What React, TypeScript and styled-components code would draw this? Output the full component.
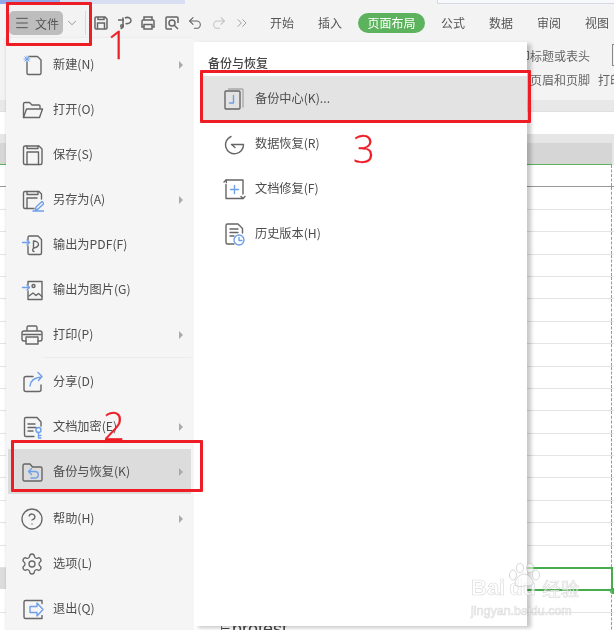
import React from "react";
import styled, { createGlobalStyle } from "styled-components";
import { ChevronDown, ChevronsRight, CircleHelp, Menu, Redo2, Settings, Undo2 } from "lucide-react";

const FONT = `"Noto Sans CJK SC", "Noto Sans", "Liberation Sans", sans-serif`;
const BLUE = "#6f9fe8";

const Global = createGlobalStyle`
  html, body { margin: 0; padding: 0; background: #fff; }
  * { box-sizing: border-box; }
`;

const Page = styled.div`
  position: relative;
  width: 614px;
  height: 630px;
  overflow: hidden;
  background: #fff;
  font-family: ${FONT};
  color: #555;
  filter: blur(0.3px);
`;
const TopStrip = styled.div`
  height: 4px;
  display: flex;
  background: #f3f3f3;
`;
const StripTab = styled.div<{ $width: number; $color: string }>`
  width: ${(p) => p.$width}px;
  background: ${(p) => p.$color};
`;
const StripFill = styled.div`
  flex: 1;
  margin-left: 252px;
  background: #f7f8fb;
  border-left: 1px solid #d5d9e4;
  border-bottom: 1px solid #d5d9e4;
`;
const Toolbar = styled.div`
  height: 38px;
  background: #f3f3f3;
  display: flex;
  align-items: center;
  padding: 0 0 0 9px;
  white-space: nowrap;
  overflow: hidden;
  & > * { flex: none; }
`;
const FileButton = styled.div`
  width: 54px;
  height: 24px;
  border-radius: 5px;
  background: #bdbdbd;
  display: flex;
  align-items: center;
  gap: 5px;
  padding-left: 5px;
  font-size: 12px;
  color: #555;
  svg { color: #555; flex: none; }
`;
const FileCaret = styled.div`
  width: 14px;
  margin-left: 2px;
  display: flex;
  color: #888;
`;
const VDivider = styled.div`
  width: 1px;
  height: 24px;
  margin: 0 7px 0 6px;
  background: #d9d9d9;
`;
const Quick = styled.div`
  display: flex;
  align-items: center;
  gap: 7.5px;
  color: #666;
  svg { flex: none; }
`;
const QuickIcon = styled.svg`
  width: 16px;
  height: 16px;
  fill: none;
  stroke: #666;
  stroke-width: 1.5;
`;
const Tabs = styled.div`
  margin-left: 8px;
  display: flex;
  align-items: center;
  & > * { flex: none; }
`;
const Tab = styled.div<{ $on?: boolean }>`
  font-size: 12px;
  line-height: 20px;
  height: 20px;
  padding: ${(p) => (p.$on ? "0 9.5px" : "0 12px")};
  margin: ${(p) => (p.$on ? "0 4px" : "0")};
  border-radius: 10px;
  color: ${(p) => (p.$on ? "#fff" : "#555")};
  background: ${(p) => (p.$on ? "#5cb25d" : "transparent")};
`;
const Ribbon = styled.div`
  height: 58px;
  background: #f3f3f3;
  display: flex;
  flex-direction: column;
  overflow: hidden;
  padding-top: 1px;
`;
const RibbonLine = styled.div<{ $inset: number }>`
  height: 24px;
  display: flex;
  align-items: center;
  gap: 8px;
  padding-left: ${(p) => p.$inset}px;
  font-size: 12px;
  color: #666;
  white-space: nowrap;
`;
const RibbonBox = styled.span`
  width: 8px;
  height: 22px;
  margin-left: 14px;
  border: 1px solid #888;
  flex: none;
`;
const RibbonEdge = styled.div`
  height: 12px;
  background: #e8e8e8;
  border-bottom: 1px solid #e0e0e0;
`;
const FormulaBar = styled.div`
  height: 22px;
  background: #fff;
`;
const HeaderGap = styled.div`
  height: 9px;
  background: #e6e6e6;
`;
const ColHeader = styled.div`
  height: 22px;
  background: #e6e6e6;
  display: flex;
`;
const ColCell = styled.div`
  width: 612px;
  height: 22px;
  background: #d6d6d6;
  border-bottom: 1.5px solid #5cb25d;
`;
const SheetRow = styled.div<{ $line: string }>`
  height: 22.4px;
  display: flex;
  border-bottom: 1px solid ${(p) => p.$line};
  position: relative;
`;
const Cell = styled.div<{ $selected?: boolean }>`
  width: ${(p) => (p.$selected ? 607 : 612)}px;
  border-right: 1px dashed #999;
  font-family: "Liberation Sans", sans-serif;
  font-size: 18px;
  color: #444;
  ${(p) => p.$selected && `
    border: 2px solid #46ad4c;
    margin-top: -1px;
    height: 24px;
    position: relative;
  `}
`;
const RowHead = styled.div<{ $selected?: boolean }>`
  width: ${(p) => (p.$selected ? 6 : 0)}px;
  flex: none;
  background: #dcdcdc;
`;
const Handle = styled.span`
  position: absolute;
  right: -5px;
  bottom: -5px;
  width: 6px;
  height: 6px;
  border-radius: 50%;
  background: #46ad4c;
`;
const CellText = styled.div`
  display: flex;
  padding: 5px 0 0 220px;
  line-height: 22px;
  white-space: nowrap;
`;
const CellTick = styled.span`
  width: 12px;
  font-size: 12px;
  flex: none;
`;
const Overlay = styled.div`
  position: absolute;
  left: 6px;
  top: 42px;
  display: flex;
  align-items: flex-start;
`;
const MainMenu = styled.div`
  width: 188px;
  height: 592px;
  margin-top: -4px;
  padding-top: 4px;
  background: #f5f5f5;
  box-shadow: -1px 0 2px rgba(0, 0, 0, 0.08);
`;
const SubMenu = styled.div`
  width: 333px;
  height: 584px;
  background: #fff;
  box-shadow: 4px 2px 4px rgba(0, 0, 0, 0.22);
  padding-top: 13px;
`;
const SubTitle = styled.div`
  height: 21px;
  padding-left: 14px;
  font-size: 12px;
  line-height: 16px;
  font-weight: 500;
  color: #444;
`;
const Label = styled.span`
  padding-bottom: 2px;
`;
const Row = styled.div<{ $active?: boolean; $gap?: number }>`
  height: 45px;
  margin: ${(p) => p.$gap ?? 0}px 3px 0 2px;
  padding: 0 8px 0 12px;
  display: flex;
  align-items: center;
  gap: 9px;
  font-size: 12.2px;
  color: #4d4d4d;
  white-space: nowrap;
  background: ${(p) => (p.$active ? "#dcdcdc" : "transparent")};
`;
const SubRow = styled.div<{ $active?: boolean }>`
  height: 45px;
  margin-left: 8px;
  padding-left: 20px;
  display: flex;
  align-items: center;
  gap: 9px;
  font-size: 12.2px;
  color: #4d4d4d;
  white-space: nowrap;
  background: ${(p) => (p.$active ? "#e3e3e3" : "transparent")};
`;
const Caret = styled.span`
  margin-left: auto;
  width: 0;
  height: 0;
  border-left: 4px solid #aaa;
  border-top: 4px solid transparent;
  border-bottom: 4px solid transparent;
`;
const MenuDivider = styled.div`
  height: 1px;
  margin: 0 3px 0 37px;
  background: #ececec;
`;
const Ico = styled.svg`
  width: 24px;
  height: 24px;
  flex: none;
  fill: none;
  stroke: #666;
  stroke-width: 1.4;
  stroke-linecap: round;
  stroke-linejoin: round;
  color: #666;
`;
const Mark = styled.div<{ $l: number; $t: number; $w: number; $h: number }>`
  position: absolute;
  left: ${(p) => p.$l}px;
  top: ${(p) => p.$t}px;
  width: ${(p) => p.$w}px;
  height: ${(p) => p.$h}px;
  border: 3.5px solid #ee1c25;
  border-radius: 1px;
`;
const Digit = styled.div<{ $l: number; $t: number }>`
  position: absolute;
  left: ${(p) => p.$l}px;
  top: ${(p) => p.$t}px;
  font-family: "Open Sans", "Liberation Sans", sans-serif;
  font-size: 38px;
  font-weight: 300;
  line-height: 38px;
  color: #ee1c25;
  -webkit-text-stroke: 0.3px #ee1c25;
`;
const Watermark = styled.div`
  position: absolute;
  left: 471px;
  top: 563px;
  width: 112px;
  color: rgba(255, 255, 255, 0.7);
  -webkit-text-stroke: 0.7px rgba(170, 170, 170, 0.4);
  font-family: "Liberation Sans", sans-serif;
`;
const WmMain = styled.div`
  display: flex;
  align-items: flex-end;
  height: 36px;
  font-size: 22px;
  line-height: 23px;
  font-weight: 700;
  white-space: nowrap;
`;
const WmGap = styled.span`
  width: 4px;
`;
const WmCjk = styled.span`
  margin-left: 6px;
  font-family: ${FONT};
  font-size: 18.5px;
  line-height: 22px;
  font-weight: 400;
`;
const WmUrl = styled.div`
  margin-top: 6px;
  font-size: 12.5px;
  line-height: 12px;
  white-space: nowrap;
`;
const Paw = styled.svg`
  position: absolute;
  left: 36px;
  top: 0;
  width: 33px;
  height: 25px;
  fill: rgba(255, 255, 255, 0.55);
  stroke: rgba(170, 170, 170, 0.45);
  stroke-width: 1;
`;

const B = { stroke: BLUE };

const icons: Record<string, React.ReactNode> = {
  new: (
    <Ico viewBox="0 0 24 24">
      <path d="M9 3.500h8.500l3.500 3.500v13a1.500 1.500 0 0 1-1.500 1.500h-11A1.500 1.500 0 0 1 7 20V9" />
      <path style={B} d="M7 3v6M4 6h6M4.800 3.800l4.400 4.400M9.200 3.800 4.800 8.200" strokeWidth="1" />
    </Ico>
  ),
  open: (
    <Ico viewBox="0 0 24 24">
      <path d="M3.500 19.500V6a1.500 1.500 0 0 1 1.500-1.500h4.500l2.500 2.500h7a1 1 0 0 1 1 1v2" />
      <path d="M3.500 19.500 6.500 11h16l-3 8.500z" />
    </Ico>
  ),
  save: (
    <Ico viewBox="0 0 24 24">
      <path d="M5 3h14l3 3v14a1.500 1.500 0 0 1-1.500 1.500H5A1.500 1.500 0 0 1 3.500 20V4.500A1.500 1.500 0 0 1 5 3z" />
      <path d="M7 21.500V9h11.500v12.500M7 3v2.500h11V3" />
    </Ico>
  ),
  saveas: (
    <Ico viewBox="0 0 24 24">
      <path d="M14 20.500H5A1.500 1.500 0 0 1 3.500 19V5A1.500 1.500 0 0 1 5 3.500h14l2.500 2.500v5" />
      <path d="M7 20V10h10M7 3.500v3h11v-3" />
      <path style={B} d="m15 22.500 1-3.500 6-5.500 2 2-6 5.500zM13 23h11" />
    </Ico>
  ),
  pdf: (
    <Ico viewBox="0 0 24 24">
      <path d="M8 7V4.500A1.500 1.500 0 0 1 9.500 3H18l3.500 3.500V20a1.500 1.500 0 0 1-1.500 1.500H9.500A1.500 1.500 0 0 1 8 20v-7" />
      <path d="M14 18.500c-1.500 0-2-2.500 0-3.500 2-.5 4.500-1 4.500-3.500S15.500 8 13.500 8v7" />
      <path style={B} d="M2.500 9.500h7M7 7l2.500 2.500L7 12" />
    </Ico>
  ),
  image: (
    <Ico viewBox="0 0 24 24">
      <path d="M8 7V3.500h14v18H8V13" />
      <circle cx="13.500" cy="8" r="1.500" />
      <path d="m9 18 4-3 3 2.500 2.500-2 3.500 3" />
      <path style={B} d="M2.500 9.500h7M7 7l2.500 2.500L7 12" />
    </Ico>
  ),
  print: (
    <Ico viewBox="0 0 24 24">
      <path d="M7 8V4.500A1.500 1.500 0 0 1 8.500 3h7A1.500 1.500 0 0 1 17 4.500V8M6 18H4A2 2 0 0 1 2 16v-6a2 2 0 0 1 2-2h16a2 2 0 0 1 2 2v6a2 2 0 0 1-2 2h-2" />
      <path d="M6 14h12v7H6zM3 11.500h18" />
    </Ico>
  ),
  share: (
    <Ico viewBox="0 0 24 24">
      <path d="M13 6.500H6A2 2 0 0 0 4 8.500v11a2 2 0 0 0 2 2h13a2 2 0 0 0 2-2V15" />
      <path style={B} d="M10 16c.5-5 4-8.500 11.500-9M18 2.500l4 4-3.500 4" />
    </Ico>
  ),
  lock: (
    <Ico viewBox="0 0 24 24">
      <path d="M14 21.500H6A1.500 1.500 0 0 1 4.500 20V4A1.500 1.500 0 0 1 6 2.500h11L21 7v4" />
      <path d="M8 9h7M8 12.500h8M8 16h5" />
      <circle style={B} cx="18.500" cy="15" r="2.500" />
      <path style={B} d="M18.500 17.500V23M18.500 20.500h2.500M18.500 23h2.500" />
    </Ico>
  ),
  backup: (
    <Ico viewBox="0 0 24 24">
      <path d="M3 19.500V5.500A1.500 1.500 0 0 1 4.500 4H10l2.500 3h8A1.500 1.500 0 0 1 22 8.500v11a1.500 1.500 0 0 1-1.500 1.500h-16A1.500 1.500 0 0 1 3 19.500z" />
      <path style={B} d="M9 11.500h6a3 3 0 0 1 0 6.500h-4M11.500 8.500l-3 3 3 3" />
    </Ico>
  ),
  exit: (
    <Ico viewBox="0 0 24 24">
      <path d="M22 6.500V3.500H5.500A1.500 1.500 0 0 0 4 5v15a1.500 1.500 0 0 0 1.500 1.500H22v-3" />
      <path style={B} d="M10 9.500h7V6l6 6.500-6 6.500v-3.500h-7z" />
    </Ico>
  ),
  center: (
    <Ico viewBox="0 0 24 24">
      <path stroke="#aaa" d="M6.500 2h13.500a1 1 0 0 1 1 1v17" />
      <rect x="3" y="4" width="15" height="18" rx="1" />
      <path style={B} d="M11.500 8.500v7.500H7.500" />
    </Ico>
  ),
  restore: (
    <Ico viewBox="0 0 24 24">
      <path d="M9 4.500A9 9 0 1 0 21.500 12.500H9.500l3.500 3" />
    </Ico>
  ),
  repair: (
    <Ico viewBox="0 0 24 24">
      <path d="M4 3h17v14M21 21.500H4V7.500" />
      <path d="m2 5 2-2 .5 2.500M23 19.500l-2 2-2-2" />
      <path style={B} d="M12.500 8.500v8M8.500 12.500h8" />
    </Ico>
  ),
  history: (
    <Ico viewBox="0 0 24 24">
      <path d="M12 22H5.500A1.500 1.500 0 0 1 4 20.500V3.500A1.500 1.500 0 0 1 5.500 2H16l4.500 4.500V11" />
      <path d="M8 7h8M8 10.500h8M8 14h4" />
      <circle style={B} cx="17" cy="18" r="5" />
      <path style={B} d="M17 15.500V18.500h3" />
    </Ico>
  ),
};

const help = <CircleHelp size={24} strokeWidth={1.3} color="#666" style={{ flex: "none" }} />;
const gear = <Settings size={24} strokeWidth={1.3} color="#666" style={{ flex: "none" }} />;

type Item = { label: string; icon: React.ReactNode; arrow?: boolean; active?: boolean; gap?: number; divider?: boolean };
const items: Item[] = [
  { label: "新建(N)", icon: icons.new, arrow: true },
  { label: "打开(O)", icon: icons.open },
  { label: "保存(S)", icon: icons.save },
  { label: "另存为(A)", icon: icons.saveas, arrow: true },
  { label: "输出为PDF(F)", icon: icons.pdf },
  { label: "输出为图片(G)", icon: icons.image },
  { label: "打印(P)", icon: icons.print, arrow: true, divider: true },
  { label: "分享(D)", icon: icons.share, gap: 1 },
  { label: "文档加密(E)", icon: icons.lock, arrow: true },
  { label: "备份与恢复(K)", icon: icons.backup, arrow: true, active: true },
  { label: "帮助(H)", icon: help, arrow: true, gap: 2 },
  { label: "选项(L)", icon: gear },
  { label: "退出(Q)", icon: icons.exit },
];
const subItems: { label: string; icon: React.ReactNode; active?: boolean }[] = [
  { label: "备份中心(K)...", icon: icons.center, active: true },
  { label: "数据恢复(R)", icon: icons.restore },
  { label: "文档修复(F)", icon: icons.repair },
  { label: "历史版本(H)", icon: icons.history },
];

const rowLine = (i: number) => (i === 0 ? "#999" : "#e4e4e4");

export default function App() {
  return (
    <>
      <Global />
      <Page>
        <TopStrip>
          <StripTab $width={60} $color="#8fa9ea" />
          <StripTab $width={125} $color="#d9dff2" />
          <StripFill />
        </TopStrip>
        <Toolbar>
          <FileButton>
            <Menu size={16} strokeWidth={1.5} />
            文件
          </FileButton>
          <FileCaret>
            <ChevronDown size={14} strokeWidth={1.5} />
          </FileCaret>
          <VDivider />
          <Quick>
            <QuickIcon viewBox="0 0 16 16">
              <path d="M3 2h9l2 2v9a1 1 0 0 1-1 1H3a1 1 0 0 1-1-1V3a1 1 0 0 1 1-1zM4.500 14V8h7v6M5 2v2.500h6V2" />
            </QuickIcon>
            <QuickIcon viewBox="0 0 16 16">
              <path d="M1 5h6M6 2.500v8c0 2-1 3-2.500 3M8 3c3-1.500 6 0 6 2.500S11 9 8.500 8.500" />
              <circle cx="5" cy="11" r="1.300" />
            </QuickIcon>
            <QuickIcon viewBox="0 0 16 16">
              <path d="M4 5V2h8v3M4 12H2V6a1 1 0 0 1 1-1h10a1 1 0 0 1 1 1v6h-2M4 9.500h8V14H4z" />
            </QuickIcon>
            <QuickIcon viewBox="0 0 16 16">
              <path d="M8 14H3a1 1 0 0 1-1-1V3a1 1 0 0 1 1-1h10a1 1 0 0 1 1 1v5" />
              <circle cx="8" cy="8" r="3" />
              <path d="m10.500 10.500 3.500 3.500" />
            </QuickIcon>
            <Undo2 size={16} strokeWidth={1.6} color="#666" />
            <Redo2 size={16} strokeWidth={1.6} color="#c4c4c4" />
            <ChevronsRight size={16} strokeWidth={1.4} color="#999" />
          </Quick>
          <Tabs>
            <Tab>开始</Tab>
            <Tab>插入</Tab>
            <Tab $on>页面布局</Tab>
            <Tab>公式</Tab>
            <Tab>数据</Tab>
            <Tab>审阅</Tab>
            <Tab>视图</Tab>
          </Tabs>
        </Toolbar>
        <Ribbon>
          <RibbonLine $inset={506}>
            打印标题或表头
            <RibbonBox />
          </RibbonLine>
          <RibbonLine $inset={530}>
            页眉和页脚
            <span>打印</span>
          </RibbonLine>
        </Ribbon>
        <RibbonEdge />
        <FormulaBar />
        <HeaderGap />
        <ColHeader>
          <ColCell />
        </ColHeader>
        {Array.from({ length: 21 }, (_, i) => {
          const selected = i === 18;
          return (
            <SheetRow key={i} $line={selected ? "transparent" : rowLine(i)}>
              <RowHead $selected={selected} />
              <Cell $selected={selected}>
                {selected && <Handle />}
                {i === 20 && (
                  <CellText>
                    <CellTick>⊢</CellTick>
                    protest
                  </CellText>
                )}
              </Cell>
            </SheetRow>
          );
        })}

        <Overlay>
          <MainMenu>
            {items.map((it) => (
              <React.Fragment key={it.label}>
                <Row $active={it.active} $gap={it.gap}>
                  {it.icon}
                  <Label>{it.label}</Label>
                  {it.arrow && <Caret />}
                </Row>
                {it.divider && <MenuDivider />}
              </React.Fragment>
            ))}
          </MainMenu>
          <SubMenu>
            <SubTitle>备份与恢复</SubTitle>
            {subItems.map((it) => (
              <SubRow key={it.label} $active={it.active}>
                {it.icon}
                <Label>{it.label}</Label>
              </SubRow>
            ))}
          </SubMenu>
        </Overlay>

        <Mark $l={6} $t={2} $w={86} $h={44} />
        <Mark $l={11} $t={440} $w={192} $h={52} />
        <Mark $l={200} $t={70} $w={331} $h={53} />
        <Digit $l={107} $t={25}>1</Digit>
        <Digit $l={103} $t={406}>2</Digit>
        <Digit $l={353} $t={129}>3</Digit>

        <Watermark>
          <Paw viewBox="0 0 33 25">
            <ellipse cx="6" cy="12" rx="3.500" ry="5" />
            <ellipse cx="13" cy="5" rx="3.500" ry="4.500" />
            <ellipse cx="23" cy="5" rx="3.500" ry="4.500" />
            <ellipse cx="29" cy="12" rx="3.500" ry="5" />
            <path d="M17 11c-4 0-9 5-9 9s5 4 9 3 9 1 9-3-5-9-9-9z" />
          </Paw>
          <WmMain>
            Bai
            <WmGap />
            du
            <WmCjk>经验</WmCjk>
          </WmMain>
          <WmUrl>jingyan.baidu.com</WmUrl>
        </Watermark>
      </Page>
    </>
  );
}
